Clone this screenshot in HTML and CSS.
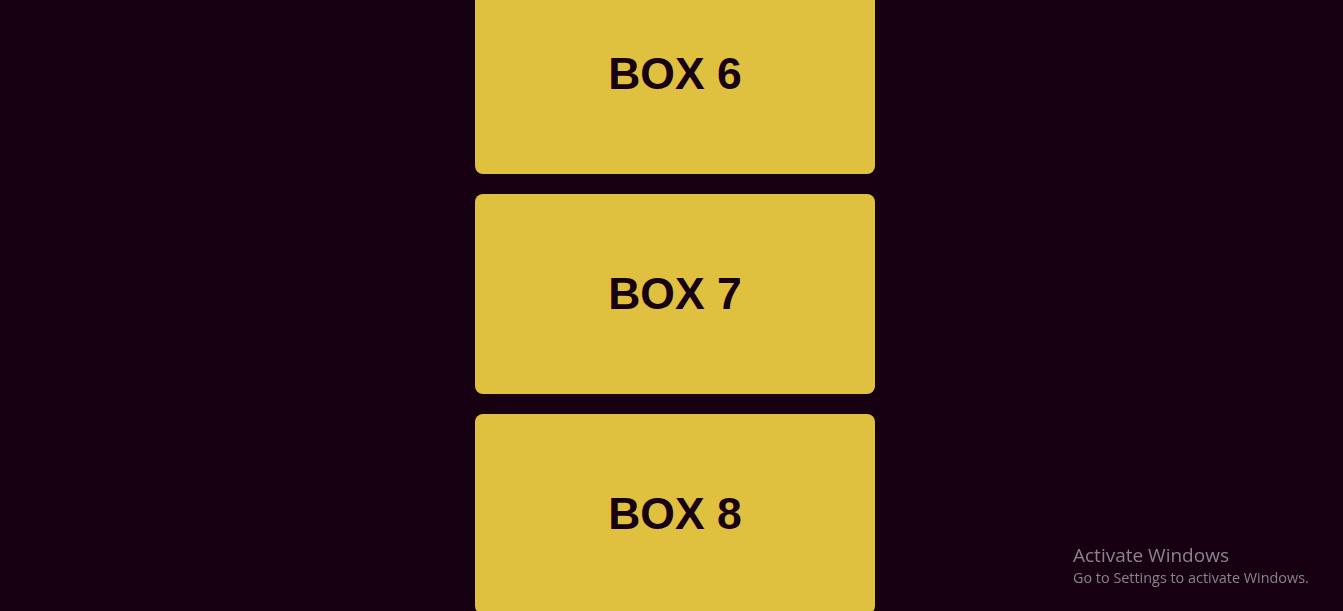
FILE: index.html
```html
<!DOCTYPE html>
<html>
<head>
<meta charset="utf-8">
<link rel="stylesheet" href="styles.css">
</head>
<body>
<div class="list">
  <div class="box">BOX 6</div>
  <div class="box">BOX 7</div>
  <div class="box">BOX 8</div>
</div>
<div class="watermark">
  <div class="wm-title">Activate Windows</div>
  <div class="wm-sub">Go to Settings to activate Windows.</div>
</div>
</body>
</html>
```
FILE: styles.css
```css
html, body {
  margin: 0;
  padding: 0;
  height: 100%;
  overflow: hidden;
  background: #170011;
}
.list {
  display: flex;
  flex-direction: column;
  align-items: center;
  gap: 20px;
  margin-top: -26px;
  padding-left: 7px;
}
.box {
  width: 400px;
  height: 200px;
  flex: none;
  background: #e0c13f;
  border-radius: 8px;
  display: flex;
  align-items: center;
  justify-content: center;
  color: #170011;
  font-family: "Liberation Sans", Arial, sans-serif;
  font-weight: bold;
  font-size: 44.5px;
}
.watermark {
  position: fixed;
  left: 1073px;
  top: 543px;
  font-family: "Open Sans", "Noto Sans", sans-serif;
  color: #8c8289;
}
.wm-title {
  font-size: 19px;
  line-height: 25px;
}
.wm-sub {
  font-size: 14.4px;
  line-height: 20px;
}
```
